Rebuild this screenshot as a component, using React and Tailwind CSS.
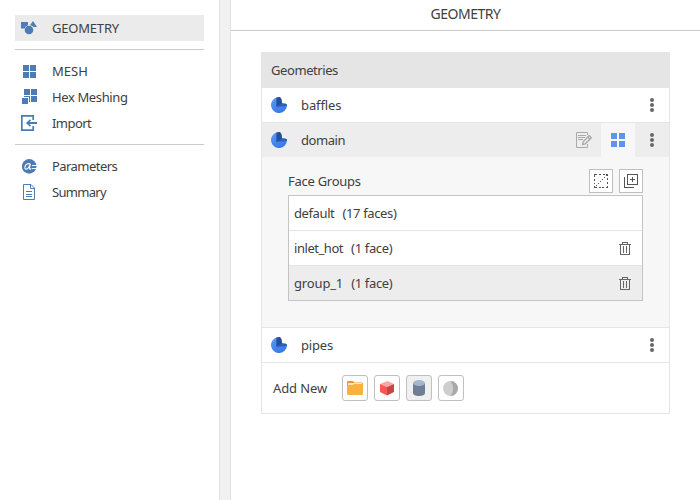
import React from "react";

const BLUE = "#4d7cb5";

function GeometryIcon() {
  return (
    <svg width="16" height="14" viewBox="0 0 16 14" className="shrink-0">
      <path fill={BLUE} d="M0 1h7v3.2A4.600 4.600 0 0 0 3.600 7.600H0z" />
      <path fill={BLUE} d="M12 0l4 6h-3.400A5 5 0 0 0 9 4.200z" />
      <circle cx="8" cy="9" r="4.300" fill={BLUE} />
    </svg>
  );
}

function MeshIcon({ color = BLUE, size = 13, className = "" }) {
  const gap = size === 13 ? 1 : 2;
  const s = (size - gap) / 2;
  return (
    <svg width={size} height={size} viewBox={`0 0 ${size} ${size}`} className={`shrink-0 ${className}`} fill={color}>
      <rect width={s} height={s} />
      <rect x={s + gap} width={s} height={s} />
      <rect y={s + gap} width={s} height={s} />
      <rect x={s + gap} y={s + gap} width={s} height={s} />
    </svg>
  );
}

function HexMeshIcon() {
  return (
    <svg width="16" height="16" viewBox="0 0 16 16" className="ml-px shrink-0" fill={BLUE}>
      <rect x="2" width="6" height="6" />
      <rect x="9" width="6" height="6" />
      <rect x="9" y="7" width="6" height="6" />
      <rect y="9" width="6" height="6" />
      <path d="M2 7h6v6H7V8H2z" />
    </svg>
  );
}

function ImportIcon() {
  return (
    <svg width="16" height="16" viewBox="0 0 16 16" className="shrink-0" fill="none" stroke={BLUE}>
      <path strokeWidth="1.700" d="M12.200 5V.85H.85v14.300h11.350V11" />
      <path strokeWidth="2" d="M16 8H7" />
      <path strokeWidth="1.700" d="M9.500 4.800L6.200 8l3.300 3.200" />
    </svg>
  );
}

function ParametersIcon() {
  return (
    <svg width="15" height="16" viewBox="0 -1 15 16" className="ml-px shrink-0">
      <circle cx="7.200" cy="7.400" r="7.300" fill={BLUE} />
      <path d="M8.300 5.300C6.500 3.800 3.400 5 2.900 7.800c-.4 2.700 1.700 3 3.200 1.300C7.200 8 7.900 6.500 8.400 4.900c-.5 2-1.400 4.500-.6 5.200.5.400 1-.1 1.500-.7" fill="none" stroke="#fff" strokeWidth="1.100" />
      <path d="M10 6.500h5M10 9.500h5" stroke="#fff" />
    </svg>
  );
}

function SummaryIcon() {
  return (
    <svg width="12" height="16" viewBox="0 0 12 16" className="ml-[2px] shrink-0" fill="none" stroke={BLUE}>
      <path d="M.5.500h7.500l3.500 3.500v11.500H.5zM7.500.500v4h4M3 7.500h6M3 10.500h6M3 12.500h6" />
    </svg>
  );
}

function BodyIcon() {
  return (
    <svg width="16" height="16" viewBox="0 0 16 16" className="shrink-0">
      <defs>
        <linearGradient id="bodyFill" x1="0" y1="0" x2="0.6" y2="1">
          <stop offset="0" stopColor="#5c9bf2" />
          <stop offset="1" stopColor="#3978ec" />
        </linearGradient>
      </defs>
      <path fill="url(#bodyFill)" d="M6 .3A8 8 0 1 0 16 8.500L12 7z" />
      <path fill="#244f98" d="M5.500.6Q7-.1 9 .1Q11 1.500 11 5V7.300L5.300 10z" />
      <path fill="#2d61b8" d="M11 6.300Q14 6 16 7.200V9L5.300 10z" />
    </svg>
  );
}

function DotsIcon() {
  return (
    <svg width="4" height="14" viewBox="0 0 4 14" fill="#666">
      <circle cx="2" cy="2" r="2" />
      <circle cx="2" cy="7" r="2" />
      <circle cx="2" cy="12" r="2" />
    </svg>
  );
}

function EditIcon() {
  return (
    <svg width="16" height="16" viewBox="0 0 16 16" fill="none" stroke="#a9a9a9">
      <path d="M11.500 3V.5H.5v15h11V12M2 3.500h8M2 5.500h7M2 7.500h5" />
      <path strokeWidth="1.300" d="M13.200 3.500l2.200 2.200-6.200 6.100-2.600.700.500-2.700zM11.700 5l2.200 2.300" />
    </svg>
  );
}

function SelectIcon() {
  return (
    <svg width="14" height="14" viewBox="0 0 14 14" fill="none" stroke="#555" shapeRendering="crispEdges">
      <path d="M0 .5h3M5 .5h2M9 .5h2M0 13.500h3M5 13.500h2M8 13.500h2M12 13.500h2M.5 1v2M.5 5v2M.5 9v1M.5 12v2M13.500 4v2M13.500 8v2M13.500 12v2" />
      <path fill="#555" stroke="none" d="M12 0h2v2h-2zM10 3h1v1h-1zM8 5h1v1H8zM6 7h1v1H6zM4 9h1v1H4zM2 11h1v1H2z" />
    </svg>
  );
}

function AddGroupIcon() {
  return (
    <svg width="14" height="14" viewBox="0 0 14 14" fill="none" stroke="#555" shapeRendering="crispEdges">
      <path d="M3.500.5h10v10h-10zM.5 3v10.500H10M8.500 3v5M6 5.500h5" />
    </svg>
  );
}

function TrashIcon() {
  return (
    <svg width="12" height="14" viewBox="0 -1 12 14" fill="none" stroke="#666" shapeRendering="crispEdges">
      <path d="M0 2.500h12M1.500 3v9.500h9V3M3.500 2V.5h5V2M4.500 4v7M7.500 4v7" />
    </svg>
  );
}

function FolderIcon() {
  return (
    <svg width="16" height="14" viewBox="0 0 16 14">
      <path fill="#e69a2c" d="M0 1l.7-1H6l1.400 1.500H15l1 1V6H0z" />
      <path fill="#ffe6b8" d="M1 2h14v3H1z" />
      <path fill="#fcb040" d="M0 4h6l1.300-1H16v10l-.7 1H.7L0 13z" />
    </svg>
  );
}

function CubeIcon() {
  return (
    <svg width="14" height="16" viewBox="0 -1 14 16">
      <path fill="#ffa5a5" d="M7.500 0L14 3 7 6 0 3z" />
      <path fill="#ff5555" d="M0 3l7 3v8.500l-7-3.500z" />
      <path fill="#c84545" d="M14 3L7 6v8.500l7-3.500z" />
    </svg>
  );
}

function CylinderIcon() {
  return (
    <svg width="12" height="16" viewBox="0 0 12 16">
      <path fill="#6f7e92" d="M0 3h12v10c0 1.700-2.700 3-6 3s-6-1.300-6-3z" />
      <ellipse cx="6" cy="3" rx="6" ry="3" fill="#a2b7d2" />
    </svg>
  );
}

function SphereIcon() {
  return (
    <svg width="16" height="16" viewBox="0 -1 16 16">
      <circle cx="7.500" cy="7.500" r="7.500" fill="#cecece" />
      <path fill="#a9a9a9" d="M7.500 0a7.500 7.500 0 0 1 0 15C11 11 11 4 7.500 0z" />
    </svg>
  );
}

function NavItem({ icon, label, active, tracking = "" }) {
  return (
    <div className={`flex h-[26px] items-center ${active ? "bg-[#ebebeb]" : ""}`}>
      <div className="ml-[6px] flex w-[17px] shrink-0">{icon}</div>
      <span className={`ml-[14px] ${tracking}`}>{label}</span>
    </div>
  );
}

function Divider() {
  return <div className="h-px bg-[#cbcbcb]" />;
}

function GeometryRow({ name, selected, tracking = "" }) {
  return (
    <div className={`flex h-[34px] items-center pl-[9px] ${selected ? "bg-[#ededed]" : "bg-white"}`}>
      <BodyIcon />
      <span className={`ml-[14px] flex-1 ${tracking}`}>{name}</span>
      {selected && (
        <>
          <div className="flex w-[34px] justify-center"><EditIcon /></div>
          <div className="flex h-full w-[34px] items-center justify-center bg-[#f7f7f7]">
            <MeshIcon color="#5f93f1" size={14} />
          </div>
        </>
      )}
      <div className="flex w-[34px] justify-center"><DotsIcon /></div>
    </div>
  );
}

function FaceGroup({ name, count, removable, selected, tracking = "" }) {
  return (
    <div className={`flex h-[34px] items-center pl-[5px] pr-[11px] ${selected ? "bg-[#ededed]" : "bg-white"}`}>
      <span className={tracking}>{name}</span>
      <span className="ml-2 flex-1 tracking-[-0.35px]">({count})</span>
      {removable && <TrashIcon />}
    </div>
  );
}

function ToolButton({ children }) {
  return (
    <div className="flex size-6 items-center justify-center border border-[#c0c0c0] bg-white">{children}</div>
  );
}

function AddButton({ children, pressed }) {
  return (
    <div className={`flex size-[26px] items-center justify-center rounded-[3px] border border-[#c0c0c0] ${pressed ? "bg-[#f0f0f0]" : "bg-white"}`}>
      {children}
    </div>
  );
}

export default function App() {
  return (
    <div className="flex h-[500px] w-[700px] overflow-hidden bg-white font-['Noto_Sans',sans-serif] text-[13px] leading-[18px] text-[#404040]">
      <nav className="w-[219px] shrink-0 px-[15px] pt-[15px]">
        <NavItem icon={<GeometryIcon />} label="GEOMETRY" active tracking="tracking-[-0.2px]" />
        <div className="pt-2"><Divider /></div>
        <div className="py-2">
          <NavItem icon={<MeshIcon className="ml-[2px] mt-px" />} label="MESH" />
          <NavItem icon={<HexMeshIcon />} label="Hex Meshing" tracking="tracking-[-0.38px]" />
          <NavItem icon={<ImportIcon />} label="Import" tracking="tracking-[-0.55px]" />
        </div>
        <Divider />
        <div className="pt-2">
          <NavItem icon={<ParametersIcon />} label="Parameters" tracking="tracking-[-0.55px]" />
          <NavItem icon={<SummaryIcon />} label="Summary" tracking="tracking-[-0.7px]" />
        </div>
      </nav>
      <div className="w-3 shrink-0 border-x border-[#e0e0e0] bg-[#f1f1f1]" />
      <main className="flex-1">
        <h1 className="h-[31px] border-b border-[#cbcbcb] pt-[5px] text-center text-[14px] tracking-[-0.45px]">GEOMETRY</h1>
        <section className="mt-[21px] ml-[30px] w-[409px] border border-t-0 border-[#e5e5e5]">
          <h2 className="flex h-9 items-center bg-[#e5e5e5] pl-[9px] tracking-[-0.42px]">Geometries</h2>
          <GeometryRow name="baffles" tracking="tracking-[-0.1px]" />
          <div className="h-px bg-[#e5e5e5]" />
          <GeometryRow name="domain" selected tracking="tracking-[-0.45px]" />
          <div className="h-[170px] bg-[#f7f7f7] pt-3 pr-[26px] pl-[26px]">
            <div className="flex h-6 items-center gap-[6px]">
              <span className="flex-1 tracking-[-0.27px]">Face Groups</span>
              <ToolButton><SelectIcon /></ToolButton>
              <ToolButton><AddGroupIcon /></ToolButton>
            </div>
            <div className="mt-[2px] border border-[#c4c4c4]">
              <FaceGroup name="default" count="17 faces" tracking="tracking-[-0.4px]" />
              <div className="h-px bg-[#e5e5e5]" />
              <FaceGroup name="inlet_hot" count="1 face" removable tracking="tracking-[-0.45px]" />
              <div className="h-px bg-[#e5e5e5]" />
              <FaceGroup name="group_1" count="1 face" removable selected tracking="tracking-[-0.15px]" />
            </div>
          </div>
          <div className="h-px bg-[#e5e5e5]" />
          <GeometryRow name="pipes" tracking="tracking-[-0.2px]" />
          <div className="h-px bg-[#e5e5e5]" />
          <div className="flex h-[50px] items-center gap-[6px] pl-[11px]">
            <span className="w-[63px] tracking-[-0.1px]">Add New</span>
            <AddButton><FolderIcon /></AddButton>
            <AddButton><CubeIcon /></AddButton>
            <AddButton pressed><CylinderIcon /></AddButton>
            <AddButton><SphereIcon /></AddButton>
          </div>
        </section>
      </main>
    </div>
  );
}
